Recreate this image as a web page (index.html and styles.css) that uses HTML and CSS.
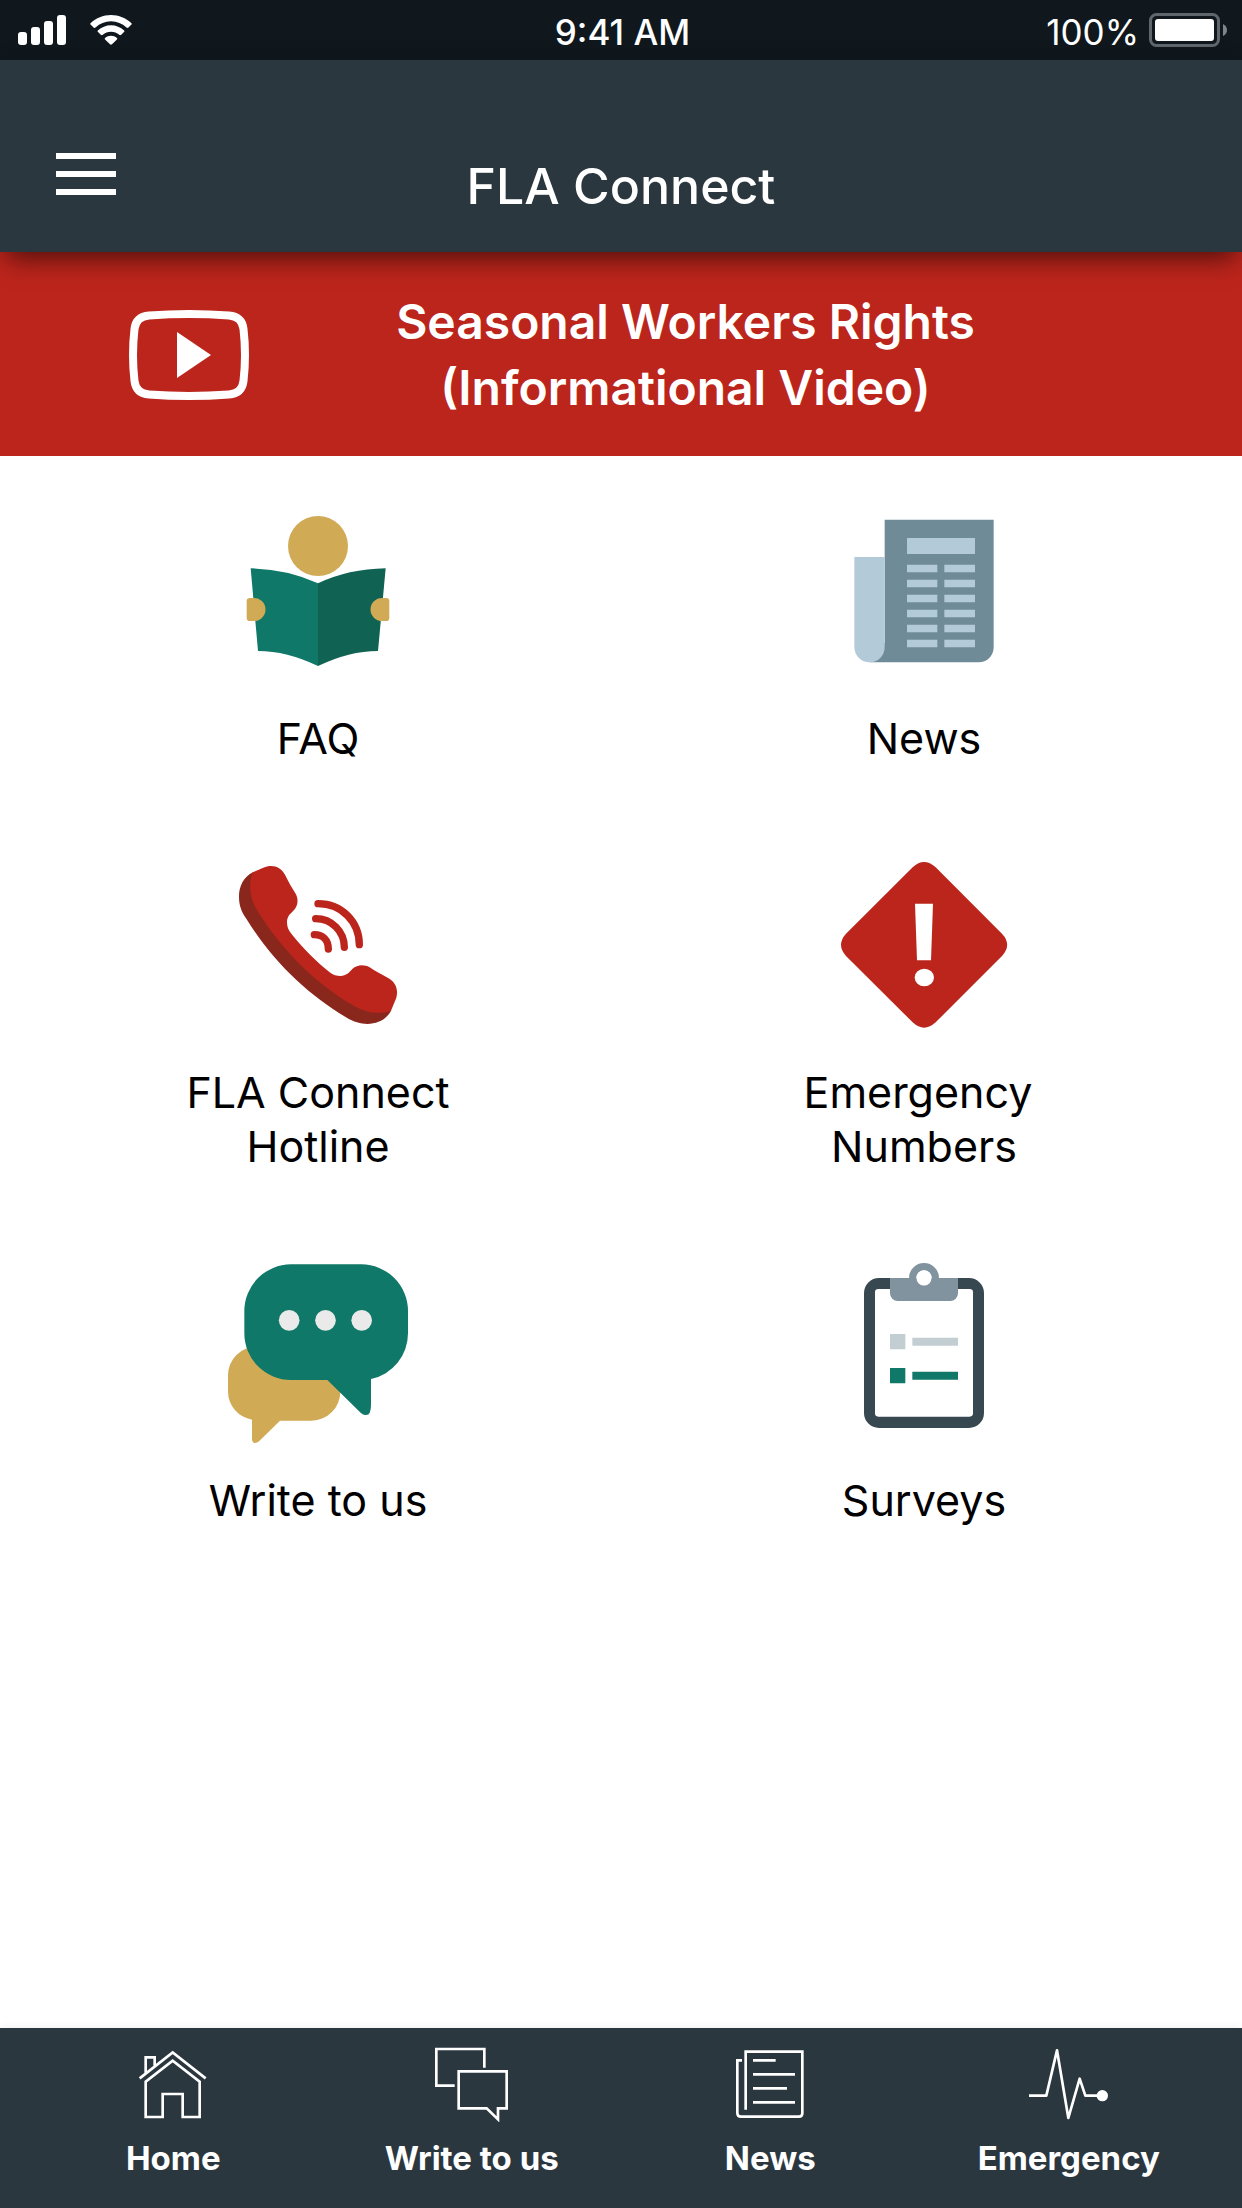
FILE: index.html
```html
<!DOCTYPE html>
<html lang="en">
<head>
<meta charset="utf-8">
<meta name="viewport" content="width=device-width, initial-scale=1">
<title>FLA Connect</title>
<link rel="stylesheet" href="styles.css">
</head>
<body>
<div class="status-bar">
  <div class="status-left">
    <svg class="signal" viewBox="0 0 48 30" aria-hidden="true"><rect y="17" width="9" height="13" rx="3"/><rect x="13" y="12" width="9" height="18" rx="3"/><rect x="26" y="6" width="9" height="24" rx="3"/><rect x="39" width="9" height="30" rx="3"/></svg>
    <svg class="wifi" viewBox="270 44 126 91" aria-hidden="true"><path d="M333 44c24 0 45 9 62 25q2 2 0 4l-9 9q-3 3-6 0c-13-12-29-19-47-19s-34 7-47 19q-3 3-6 0l-9-9q-2-2 0-4c17-16 38-25 62-25Z"/><path d="M333 75c15 0 29 6 40 16q2 2 0 4l-9 9q-3 3-6 0c-7-6-15-9-25-9s-18 3-25 9q-3 3-6 0l-9-9q-2-2 0-4c11-10 25-16 40-16Z"/><path d="M333 107c7 0 13 2 18 7q2 2 0 4l-15 15q-3 3-6 0l-15-15q-2-2 0-4c5-5 11-7 18-7Z"/></svg>
  </div>
  <span class="status-time">9:41 AM</span>
  <div class="status-right">
    <span>100%</span>
    <svg class="battery" viewBox="0 0 78 34" aria-hidden="true"><rect class="battery-shell" x="1.5" y="1.5" width="68" height="31" rx="6"/><rect x="6" y="6" width="59" height="22" rx="3"/><path class="battery-cap" d="M74 11q4 2 4 6t-4 6Z"/></svg>
  </div>
</div>

<header class="app-header">
  <button class="menu-button" type="button" aria-label="Open menu"><span></span><span></span><span></span></button>
  <h1>FLA Connect</h1>
</header>

<a class="banner" href="#video">
  <svg class="banner-icon" viewBox="0 0 120 90" aria-hidden="true"><path class="frame" d="M20 5.500Q60 2.500 100 5.500Q113 6.500 114.500 19Q117.500 45 114.500 71Q113 83.500 100 84.500Q60 87.500 20 84.500Q7 83.500 5.500 71Q2.500 45 5.500 19Q7 6.500 20 5.500Z"/><path class="play" d="M48 22L82 45L48 68Z"/></svg>
  <span class="banner-text">Seasonal Workers Rights<br>(Informational Video)</span>
</a>

<main class="tiles">
  <a class="tile" href="#faq">
    <svg viewBox="24 3 540 540" aria-hidden="true"><circle cx="294" cy="138" r="90" fill="#d1aa55"/><path fill="#107868" d="M92 205Q202 207 294 250V498Q200 453 114 453Z"/><path fill="#106253" d="M497 205Q385 207 294 250V498Q388 453 474 453Z"/><path fill="#d1aa55" d="M90 294h12a34.500 34.500 0 0 1 0 69H90q-10 0-10-10v-49q0-10 10-10ZM498 294h-12a34.500 34.500 0 0 0 0 69h12q10 0 10-10v-49q0-10-10-10Z"/></svg>
    <span>FAQ</span>
  </a>
  <a class="tile" href="#news">
    <svg viewBox="42 3 540 540" aria-hidden="true"><path fill="#708b98" d="M194 59H521V442a45 45 0 0 1-45 45H149V430H194Z"/><path fill="#b3cad8" d="M103 171h91v271a45 45 0 0 1-45 45a46 46 0 0 1-46-45ZM261 114h204v48H261Z"/><path fill="#b3cad8" d="M261 194h91v23h-91Zm112 0h92v23h-92ZM261 239h91v23h-91Zm112 0h92v23h-92ZM261 284h91v23h-91Zm112 0h92v23h-92ZM261 329h91v23h-91Zm112 0h92v23h-92ZM261 374h91v23h-91Zm112 0h92v23h-92ZM261 419h91v23h-91Zm112 0h92v23h-92Z"/></svg>
    <span>News</span>
  </a>
  <a class="tile" href="#hotline">
    <svg viewBox="174 15 540 540" aria-hidden="true"><path fill="#8a271d" d="M250 66C220 81 207 109 207 140C207 165 214 184 228 205C310 337 411 432 528 502C551 516 572 522 592 522C624 521 650 508 664 481L540 440L340 270Z"/><path fill="#bc251c" d="M248 67L280 53C306 42 332 49 345 74C355 95 366 113 377 131C387 150 383 170 370 182C360 192 351 199 351 216C351 229 354 239 364 251C402 298 436 332 478 366C490 376 500 378 512 378C528 377 538 368 547 357C562 344 581 343 599 352C617 364 635 374 653 383C676 395 686 417 679 443L663 482C625 495 587 488 551 467C430 397 326 289 257 173C238 139 236 99 248 67Z"/><g fill="none" stroke="#bc251c" stroke-width="22" stroke-linecap="round"><path d="M444 161C515 161 568 215 568 284M437 206C485 206 523 244 523 292M433 254C459 254 475 270 475 297"/></g></svg>
    <span>FLA Connect<br>Hotline</span>
  </a>
  <a class="tile" href="#emergency-numbers">
    <svg viewBox="162 15 540 540" aria-hidden="true"><path fill="#bc251c" d="M398 52Q432 20 467 52L666 251Q697 284 666 318L467 517Q432 549 398 517L198 318Q168 284 198 251Z"/><path fill="#fff" d="M405 161H459L453 331H411Z"/><ellipse cx="433" cy="382.500" rx="29" ry="26" fill="#fff"/></svg>
    <span>Emergency&nbsp;<br>Numbers</span>
  </a>
  <a class="tile" href="#write">
    <svg viewBox="114 39 540 540" aria-hidden="true"><path fill="#d1aa55" d="M200 290H365A86 86 0 0 1 451 376V425A87 87 0 0 1 365 512H270L207 574Q201 579 195 579Q186 578 186 566V509A86 86 0 0 1 114 425V376A86 86 0 0 1 200 290Z"/><path fill="#107868" d="M303 43H514A140 140 0 0 1 654 183V250A140 140 0 0 1 543 387V465Q543 495 528 495Q520 496 512 488L412 390H303A140 140 0 0 1 163 250V183A140 140 0 0 1 303 43Z"/><g fill="#eaeaea"><circle cx="297.500" cy="211" r="31"/><circle cx="406.500" cy="211" r="31"/><circle cx="515" cy="211" r="31"/></g></svg>
    <span>Write to us</span>
  </a>
  <a class="tile" href="#surveys">
    <svg viewBox="42 39 540 540" aria-hidden="true"><rect x="132" y="84" width="360" height="450" rx="45" fill="#374851"/><rect x="165" y="117" width="294" height="383" rx="10" fill="#fff"/><path fill="#80939e" fill-rule="evenodd" d="M210 84H267a45 45 0 0 1 90 0h57v46a23 23 0 0 1-23 23H233a23 23 0 0 1-23-23ZM289 84a23 23 0 1 0 46 0a23 23 0 1 0-46 0Z"/><circle cx="312" cy="84" r="23" fill="#fff"/><path fill="#c3ced2" d="M210 252h46v46h-46ZM277 263h137v24H277Z"/><path fill="#107868" d="M210 354h46v46h-46ZM277 365h137v24H277Z"/></svg>
    <span>Surveys</span>
  </a>
</main>

<nav class="tab-bar" aria-label="Main">
  <a href="#home">
    <svg viewBox="99 78 240 228" aria-hidden="true"><path d="M119 175L218 97L317 175M137 159V112H164V138M137 291V185L218 122L299 185V291H248V222H188V291Z"/></svg>
    <span>Home</span>
  </a>
  <a href="#write">
    <svg viewBox="996 78 240 228" aria-hidden="true"><path d="M1153 143V87H1009V197H1064M1076 154H1220V265H1194V298L1160 265H1076Z"/></svg>
    <span>Write to us</span>
  </a>
  <a href="#news">
    <svg viewBox="150 78 240 228" aria-hidden="true"><path d="M197 269V95H367V280Q367 290 357 290H183Q172 290 172 279V121H186M219 121H287M219 163H345M219 205H321M219 247H345"/></svg>
    <span>News</span>
  </a>
  <a href="#emergency">
    <svg viewBox="1047 78 240 228" aria-hidden="true"><path stroke-linejoin="round" d="M1047 227H1099L1131 91L1165 294L1199 176L1216 227H1266"/><circle class="dot" cx="1267" cy="227" r="17"/></svg>
    <span>Emergency</span>
  </a>
</nav>
</body>
</html>
```
FILE: styles.css
```css
* {
  box-sizing: border-box;
}

body {
  margin: 0;
  min-height: 100vh;
  display: flex;
  flex-direction: column;
  background: #fff;
  color: #000;
  font-family: Inter, "Liberation Sans", sans-serif;
}

a {
  color: inherit;
  text-decoration: none;
}

svg {
  display: block;
  flex: none;
}

/* Device status bar */
.status-bar {
  display: grid;
  grid-template-columns: 1fr auto 1fr;
  align-items: center;
  height: 60px;
  padding: 4px 15px 0 18px;
  background: #10181e;
  color: #fff;
  font-size: 35px;
  line-height: 56px;
}

.status-left,
.status-right {
  display: flex;
  align-items: center;
  fill: #fff;
}

.status-left {
  gap: 24px;
  padding-bottom: 4px;
}

.status-right {
  justify-content: flex-end;
  gap: 10px;
}

.status-time {
  font-weight: 500;
}

.signal {
  width: 48px;
  height: 30px;
}

.wifi {
  width: 42px;
  height: 30px;
}

.battery {
  width: 78px;
  height: 34px;
  margin-bottom: 4px;
}

.battery-shell {
  fill: none;
  stroke: #5f666c;
  stroke-width: 3;
}

.battery-cap {
  fill: #80858a;
}

/* Title bar */
.app-header {
  position: relative;
  z-index: 1;
  display: grid;
  grid-template-columns: 1fr auto 1fr;
  align-items: start;
  padding: 84px 56px 36px;
  background: #2b373f;
  color: #fff;
  box-shadow: 0 15px 24px -9px rgba(0, 0, 0, 0.5), 0 4px 24px rgba(0, 0, 0, 0.15);
}

.app-header h1 {
  margin: 0;
  padding-top: 12px;
  font-size: 50px;
  line-height: 60px;
  font-weight: 500;
}

.menu-button {
  display: flex;
  flex-direction: column;
  justify-content: center;
  gap: 12px;
  width: 60px;
  height: 60px;
  padding: 0;
  border: 0;
  background: none;
}

.menu-button span {
  height: 6px;
  background: #fff;
}

/* Video banner */
.banner {
  display: flex;
  align-items: center;
  padding: 37px 120px 35px 129px;
  background: #bc251c;
  color: #fff;
}

.banner-icon {
  width: 120px;
  height: 90px;
}

.banner-icon .frame {
  fill: none;
  stroke: #fff;
  stroke-width: 8;
}

.banner-icon .play {
  fill: #fff;
}

.banner-text {
  flex: 1;
  text-align: center;
  font-size: 48px;
  line-height: 66px;
  font-weight: 600;
}

/* Shortcuts */
.tiles {
  flex: 1;
  display: grid;
  grid-template-columns: 1fr 1fr;
  align-content: start;
  row-gap: 90px;
  padding: 45px 15px;
}

.tile {
  display: flex;
  flex-direction: column;
  align-items: center;
  gap: 30px;
  font-size: 43px;
  line-height: 54px;
  text-align: center;
}

.tile svg {
  width: 180px;
  height: 180px;
}

/* Bottom navigation */
.tab-bar {
  display: grid;
  grid-template-columns: repeat(4, 1fr);
  padding: 18px 24px 30px;
  background: #2b373f;
  color: #fff;
  box-shadow: 0 0 9px rgba(0, 0, 0, 0.08);
}

.tab-bar a {
  display: flex;
  flex-direction: column;
  align-items: center;
  gap: 16px;
  font-size: 33px;
  line-height: 40px;
  font-weight: 700;
}

.tab-bar svg {
  width: 80px;
  height: 76px;
  fill: none;
  stroke: #fff;
  stroke-width: 8;
}

.tab-bar .dot {
  fill: #fff;
  stroke: none;
}
```
